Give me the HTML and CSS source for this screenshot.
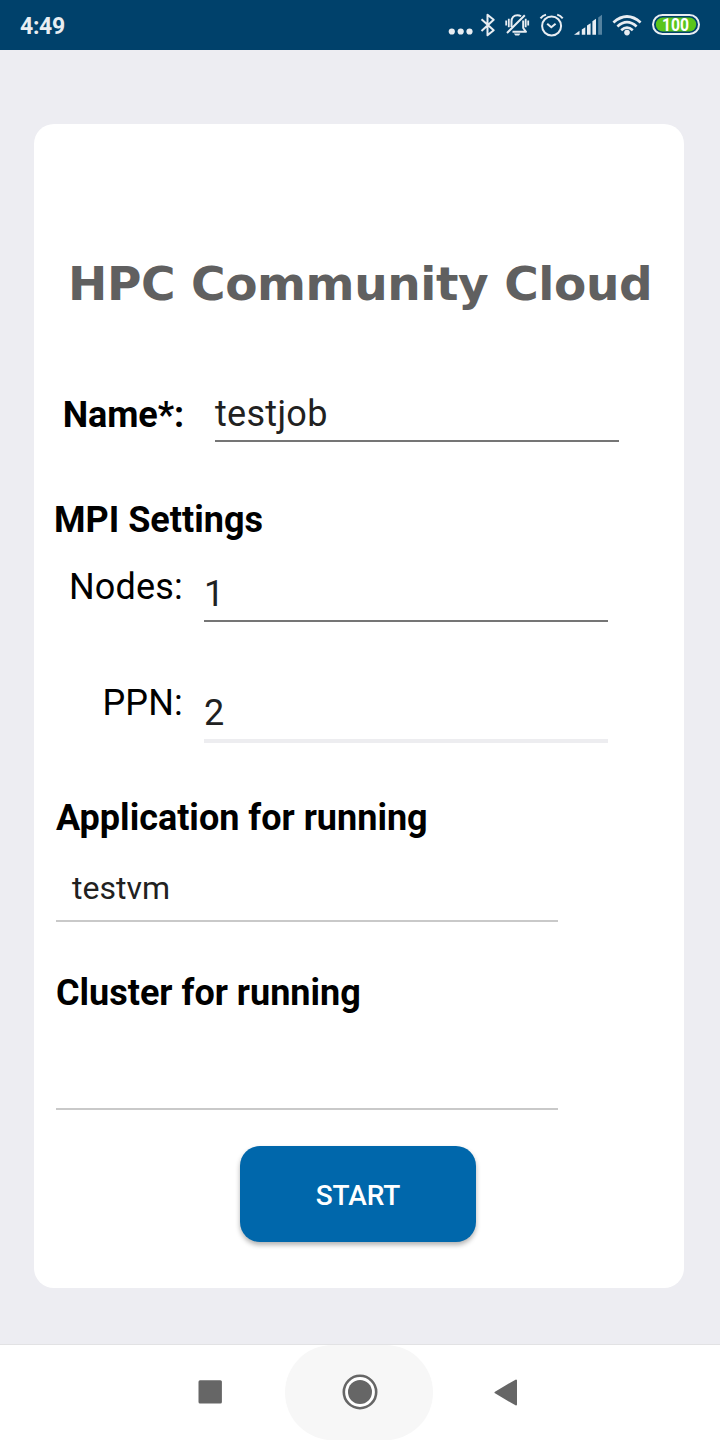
FILE: index.html
```html
<!DOCTYPE html>
<html lang="en">
<head>
<meta charset="utf-8">
<title>HPC Community Cloud</title>
<link rel="stylesheet" href="styles.css">
</head>
<body>
<header class="status-bar">
  <span class="clock">4:49</span>
  <svg class="status-icons" width="260" height="50" viewBox="440 0 260 50" fill="none" stroke="#e8edf2" stroke-width="2">
    <g fill="#e8edf2" stroke="none">
      <circle cx="451.8" cy="31.5" r="3.1"/><circle cx="460.7" cy="31.5" r="3.1"/><circle cx="469.5" cy="31.5" r="3.1"/>
    </g>
    <path d="M481.5 19.3L493.7 30.3L487.5 35.3V14.7L493.7 19.8L481.5 31" stroke-linejoin="round"/>
    <path d="M512.5 31.8H526L523.2 28V20.5M511.5 27V21.5C511.5 17.5 513.8 15.2 517.4 15.2C518.8 15.2 520 15.6 521 16.3M507 33L524.8 15.2" stroke-linejoin="round"/>
    <path d="M513.8 33.6H520.4L519 35.4H515.4Z" fill="#e8edf2" stroke="none"/>
    <path d="M506.2 20.5V25.5M508.8 18.8V27.3M525.7 18.8V27.3M528.2 20.5V25.5" stroke-width="1.8"/>
    <circle cx="551.6" cy="26" r="9.5"/>
    <path d="M547.2 23.7L551.3 27.2L555.6 23.7M540.5 18.3C542 16.5 543.6 15.4 546 14.6M562.7 18.3C561.2 16.5 559.6 15.4 557.2 14.6"/>
    <g fill="#e8edf2" stroke="none">
      <path d="M574 34.7L579.5 30.8V34.7Z"/><path d="M581.8 29.5L585.3 27.3V34.7H581.8Z"/><path d="M587 25.5L590.6 23.3V34.7H587Z"/><path d="M592.4 21.2L596 18.7V34.7H592.4Z"/><path fill="#5482a0" d="M598.2 17.4L602 14.8V34.7H598.2Z"/>
      <circle cx="627" cy="32.6" r="2.8"/>
    </g>
    <path d="M613.4 22.4Q627 10.6 640.6 22.4M617.4 26.4Q627 18 636.6 26.4M621.2 30.2Q627 25.2 632.8 30.2" stroke-width="2.7"/>
    <rect x="653" y="15" width="46" height="19" rx="9.5"/>
    <rect x="655.8" y="17.6" width="40.4" height="13.8" rx="6.9" fill="#5ac51b" stroke="none"/>
    <text x="662" y="31" class="battery-text" textLength="27" lengthAdjust="spacingAndGlyphs">100</text>
  </svg>
</header>

<main class="screen">
  <form class="card">
    <h1 class="title">HPC Community Cloud</h1>
    <div class="row row-name">
      <label class="label strong">Name*:</label>
      <div class="field">testjob</div>
    </div>
    <h2 class="heading heading-mpi">MPI Settings</h2>
    <div class="row row-nodes">
      <label class="label">Nodes:</label>
      <div class="field">1</div>
    </div>
    <div class="row row-ppn">
      <label class="label">PPN:</label>
      <div class="field field-light">2</div>
    </div>
    <h2 class="heading heading-app">Application for running</h2>
    <div class="select select-app">testvm</div>
    <h2 class="heading heading-cluster">Cluster for running</h2>
    <div class="select select-cluster"></div>
    <button class="start" type="button">START</button>
  </form>
</main>

<nav class="nav-bar">
  <div class="nav-item"><svg width="24" height="24" viewBox="0 0 24 24"><rect x=".5" y=".3" width="23.4" height="23.2" rx="1.5" fill="#666"/></svg></div>
  <div class="nav-item nav-home"><svg width="36" height="36" viewBox="0 0 36 36"><circle cx="18" cy="18" r="16.2" fill="#fff" stroke="#666" stroke-width="2.6"/><circle cx="18" cy="18" r="12" fill="#666"/></svg></div>
  <div class="nav-item"><svg width="24" height="27" viewBox="0 0 24 27"><path d="M1.5 13.5L22 1.5V25.5Z" fill="#666" stroke="#666" stroke-width="2" stroke-linejoin="round"/></svg></div>
</nav>
</body>
</html>
```
FILE: styles.css
```css
* { box-sizing: border-box; }
body {
  margin: 0;
  width: 720px;
  height: 1440px;
  display: flex;
  flex-direction: column;
  overflow: hidden;
  background: #ededf2;
  font-family: Roboto, "Liberation Sans", sans-serif;
  font-size: 36px;
  line-height: 42px;
  color: #000;
}
.status-bar {
  height: 50px;
  padding: 0 20px;
  display: flex;
  justify-content: space-between;
  align-items: center;
  background: #00416b;
}
.clock {
  color: #e8edf2;
  font-size: 23px;
  font-weight: 700;
  line-height: 28px;
  letter-spacing: -0.3px;
  padding-top: 3px;
}
.status-icons { display: block; }
.battery-text {
  font-family: Roboto, "Liberation Sans", sans-serif;
  font-size: 17.5px;
  font-weight: 700;
  fill: #fff;
  stroke: none;
}
.screen {
  flex: 1;
  padding: 74px 36px 56px 34px;
}
.card {
  height: 1164px;
  display: flex;
  flex-direction: column;
  background: #fff;
  border-radius: 20px;
}
.title {
  margin: 132px 0 81px;
  padding-left: 34px;
  font: 700 47px/56px "DejaVu Sans", sans-serif;
  color: #606060;
  letter-spacing: -0.4px;
  white-space: nowrap;
}
.row { display: flex; }
.label { text-align: right; }
.strong { font-weight: 700; }
.field {
  width: 404px;
  border-bottom: 2px solid #757575;
  color: #212121;
}
.row-name { height: 49px; gap: 31px; }
.row-name .label { width: 150px; padding-top: 1px; letter-spacing: -0.1px; }
.row-name .field { letter-spacing: 0.3px; }
.row-nodes { height: 56px; gap: 21px; }
.row-ppn { height: 61px; gap: 21px; margin-top: 60px; }
.row-nodes .label, .row-ppn .label { width: 149px; letter-spacing: 0.2px; }
.row-nodes .field { padding-top: 7px; }
.row-ppn .field { padding-top: 10px; }
.row-ppn .field-light { border-bottom: 4px solid #ededf0; }
.heading {
  margin: 0 0 0 22px;
  font-size: 36px;
  font-weight: 700;
}
.heading-mpi { margin: 57px 0 25px 20px; }
.heading-app { margin-top: 54px; margin-bottom: 30px; }
.heading-cluster { margin-top: 50px; }
.select {
  width: 502px;
  margin-left: 22px;
  padding-left: 16px;
  border-bottom: 2px solid #c9c9c9;
  color: #212121;
  font-size: 32px;
  line-height: 38px;
}
.select-app { height: 53px; }
.select-cluster { height: 96px; }
.start {
  width: 236px;
  height: 96px;
  margin: 36px 0 0 206px;
  padding: 3px 0 0;
  border: 0;
  border-radius: 20px;
  background: #0067ab;
  color: #fff;
  font: 500 28px/34px Roboto, "Liberation Sans", sans-serif;
  letter-spacing: -0.1px;
  box-shadow: 0 3px 5px rgba(0, 0, 0, .3);
}
.nav-bar {
  height: 96px;
  padding: 0 135px 0 136px;
  display: flex;
  border-top: 1px solid #e2e2e4;
  background: #fff;
}
.nav-item {
  width: 148px;
  display: flex;
  align-items: center;
  justify-content: center;
}
.nav-item svg { margin-bottom: 1px; }
.nav-item:last-child svg { margin-right: 5px; }
.nav-home {
  margin: 0 1px;
  border-radius: 48px;
  background: #f7f7f7;
}
.nav-home svg { margin-left: 1px; }
```
